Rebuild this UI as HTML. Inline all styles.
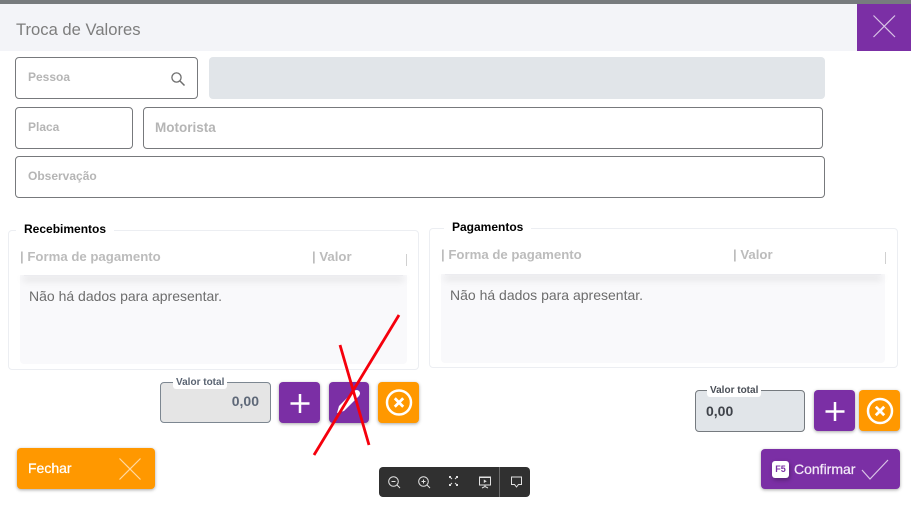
<!DOCTYPE html>
<html lang="pt">
<head>
<meta charset="utf-8">
<title>Troca de Valores</title>
<style>
html,body{margin:0;padding:0;background:#fff}
body{width:911px;height:507px;position:relative;overflow:hidden;font-family:"Liberation Sans",Arial,sans-serif}
div,span{position:absolute;box-sizing:border-box;white-space:nowrap}
.inp{border:1px solid #77797c;border-radius:4px;background:#fff}
.ph{color:#b5b5b5;font-weight:700;font-size:12px;line-height:14px}
.box{border:1px solid #eceef2;border-radius:4px;background:#fff}
.leg{background:#fff;color:#000;font-weight:700;font-size:12px;line-height:15px;padding:0 8px}
.th{color:#bcbcbc;font-weight:700;font-size:13.2px;line-height:15px}
.tbody{background:#f9f9fb;border-radius:0 0 4px 4px}
.shd{height:1px;background:#ececf0;box-shadow:0 3px 8px 1px rgba(0,0,0,.16);clip-path:inset(0 -10px -14px -10px)}
.empty{color:#6d6d6d;font-size:14px;line-height:16px}
.btn{border-radius:4px;box-shadow:0 1px 3px rgba(0,0,0,.35)}
.pur{background:#7b2fa5}
.org{background:#ff9800}
svg{position:absolute;display:block}
</style>
</head>
<body>
<div style="left:0;top:0;width:911px;height:4px;background:#777b7e"></div>
<div style="left:0;top:4px;width:911px;height:47px;background:#f3f4f8"></div>
<div style="left:16px;top:20px;font-size:16.6px;line-height:20px;color:#7d7d7d">Troca de Valores</div>
<div style="left:857px;top:4px;width:54px;height:47px;background:#7b2fa5"></div>
<svg style="left:857px;top:4px" width="54" height="47"><path d="M16.500 11.500 L38 33 M38 11.500 L16.500 33" stroke="#d9c4e6" stroke-width="1.200" fill="none"/></svg>

<div class="inp" style="left:15px;top:57px;width:183px;height:42px"></div>
<div class="ph" style="left:28px;top:70px">Pessoa</div>
<svg style="left:170px;top:71px" width="16" height="16" viewBox="0 0 16 16"><circle cx="6.500" cy="6.500" r="4.600" fill="none" stroke="#6e6e6e" stroke-width="1.300"/><path d="M10 10 L14.500 14.500" stroke="#6e6e6e" stroke-width="1.500"/></svg>
<div style="left:209px;top:57px;width:616px;height:42px;background:#e1e5e9;border-radius:4px"></div>

<div class="inp" style="left:15px;top:107px;width:118px;height:42px"></div>
<div class="ph" style="left:28px;top:120px">Placa</div>
<div class="inp" style="left:143px;top:107px;width:680px;height:42px"></div>
<div class="ph" style="left:155px;top:121px;font-size:13.500px">Motorista</div>
<div class="inp" style="left:15px;top:156px;width:810px;height:42px"></div>
<div class="ph" style="left:28px;top:169px">Observação</div>

<!-- Recebimentos -->
<div class="box" style="left:8px;top:230px;width:411px;height:140px"></div>
<div class="leg" style="left:16px;top:222px">Recebimentos</div>
<div class="th" style="left:20px;top:249px">| Forma de pagamento</div>
<div class="th" style="left:312px;top:249px">| Valor</div>
<div style="left:406px;top:254px;width:1px;height:12px;background:#d0d0d0"></div>
<div class="tbody" style="left:20px;top:275px;width:387px;height:89px"></div>
<div class="shd" style="left:24px;top:275px;width:379px"></div>
<div class="empty" style="left:29px;top:288px">Não há dados para apresentar.</div>

<!-- Pagamentos -->
<div class="box" style="left:429px;top:228px;width:469px;height:140px"></div>
<div class="leg" style="left:444px;top:220px">Pagamentos</div>
<div class="th" style="left:441px;top:247px">| Forma de pagamento</div>
<div class="th" style="left:733px;top:247px">| Valor</div>
<div style="left:885px;top:252px;width:1px;height:12px;background:#d0d0d0"></div>
<div class="tbody" style="left:441px;top:274px;width:444px;height:89px"></div>
<div class="shd" style="left:445px;top:274px;width:436px"></div>
<div class="empty" style="left:450px;top:287px">Não há dados para apresentar.</div>

<!-- Total esquerda -->
<div style="left:160px;top:382px;width:111px;height:41px;background:#e5e5e5;border:1px solid #7d8791;border-radius:4px"></div>
<div style="left:173px;top:376px;background:#fff;color:#5a6472;font-size:10px;line-height:13px;padding:0 3px;border-radius:3px;font-weight:700">Valor total</div>
<div style="right:652px;top:393px;color:#5e6878;font-weight:700;font-size:14px;line-height:16px">0,00</div>

<div class="btn pur" style="left:279px;top:382px;width:41px;height:41px"></div>
<svg style="left:279px;top:382px" width="41" height="41"><path d="M21 12 V31 M11.500 21.500 H30.500" stroke="#fff" stroke-width="2.500" fill="none"/></svg>
<div class="btn pur" style="left:329px;top:382px;width:40px;height:41px"></div>
<svg style="left:329px;top:382px" width="40" height="41"><path d="M8 31 L10 24 L25 9 Q28 7 30 9 Q32 11 30 14 L15 29 Z" fill="#fff"/></svg>
<div class="btn org" style="left:378px;top:382px;width:41px;height:41px"></div>
<svg style="left:378px;top:382px" width="41" height="41"><circle cx="21" cy="20.500" r="12" fill="none" stroke="#fff" stroke-width="2.500"/><path d="M16.800 16.300 L25.200 24.700 M25.200 16.300 L16.800 24.700" stroke="#fff" stroke-width="2.800"/></svg>

<!-- Total direita -->
<div style="left:695px;top:390px;width:110px;height:42px;background:#e1e5e9;border:1px solid #757a7f;border-radius:4px"></div>
<div style="left:707px;top:384px;background:#fff;color:#4a4f57;font-size:10px;line-height:13px;padding:0 3px;border-radius:3px;font-weight:700">Valor total</div>
<div style="left:706px;top:403px;color:#3f434a;font-weight:700;font-size:14px;line-height:16px">0,00</div>

<div class="btn pur" style="left:814px;top:390px;width:41px;height:41px"></div>
<svg style="left:814px;top:390px" width="41" height="41"><path d="M21 12 V31 M11.500 21.500 H30.500" stroke="#fff" stroke-width="2.500" fill="none"/></svg>
<div class="btn org" style="left:859px;top:390px;width:41px;height:41px"></div>
<svg style="left:859px;top:390px" width="41" height="41"><circle cx="21" cy="21" r="12" fill="none" stroke="#fff" stroke-width="2.500"/><path d="M16.800 16.800 L25.200 25.200 M25.200 16.800 L16.800 25.200" stroke="#fff" stroke-width="2.800"/></svg>

<!-- Fechar -->
<div class="btn org" style="left:17px;top:448px;width:138px;height:41px"></div>
<div style="left:28px;top:460px;color:#fff;font-size:14px;line-height:16px;-webkit-text-stroke:.25px #fff">Fechar</div>
<svg style="left:118px;top:457px" width="24" height="24"><path d="M1.500 1.500 L22.500 22.500 M22.500 1.500 L1.500 22.500" stroke="#ffd9a0" stroke-width="1.200" fill="none"/></svg>

<!-- Confirmar -->
<div class="btn pur" style="left:761px;top:449px;width:139px;height:40px"></div>
<div style="left:772px;top:461px;width:17px;height:17px;background:#fff;border-radius:3px;color:#7b2fa5;font-size:9px;font-weight:700;line-height:17px;text-align:center;box-shadow:1px 2px 4px rgba(0,0,0,.3)">F5</div>
<div style="left:794px;top:461px;color:#f2e8f7;font-size:14px;line-height:16px;-webkit-text-stroke:.25px #f2e8f7">Confirmar</div>
<svg style="left:860px;top:458px" width="30" height="24"><path d="M2 12 L10 21 L28 2" stroke="#d9c4e6" stroke-width="1.200" fill="none"/></svg>

<!-- Barra de ferramentas -->
<div style="left:379px;top:467px;width:151px;height:30px;background:#303030;border-radius:4px"></div>
<div style="left:499px;top:467px;width:1px;height:30px;background:#6a6a6a"></div>
<svg style="left:379px;top:467px" width="151" height="30" fill="none" stroke="#e2e2e2" stroke-width="1">
<circle cx="14.500" cy="14.500" r="4.800"/><path d="M18 18 L21 21 M12.500 14.500 H16.500"/>
<circle cx="44.500" cy="14.500" r="4.800"/><path d="M48 18 L51 21 M42.500 14.500 H46.500 M44.500 12.500 V16.500"/>
<path d="M70.500 11 V9.500 H72 M77 9.500 H78.500 V11 M78.500 17 V18.500 H77 M72 18.500 H70.500 V17 M71 10 L73 12 M78 10 L76 12 M78 18 L76 16 M71 18 L73 16"/>
<path d="M100.500 10.500 H111.500 V18 H100.500 Z M106 18 V20 M103 21 L106 19.500 L109 21 M100 10 H112"/>
<path d="M104.800 12.500 L107.800 14.300 L104.800 16 Z" fill="#e2e2e2" stroke="none"/>
<path d="M132.500 10 H142.500 V17.500 H139.500 L137.500 20 L135.500 17.500 H132.500 Z"/>
</svg>

<!-- Traços vermelhos -->
<svg style="left:0;top:0" width="911" height="507"><path d="M399 315 L314 455 M340 345 L369 445" stroke="#f5000c" stroke-width="2.800" fill="none"/></svg>
</body>
</html>
